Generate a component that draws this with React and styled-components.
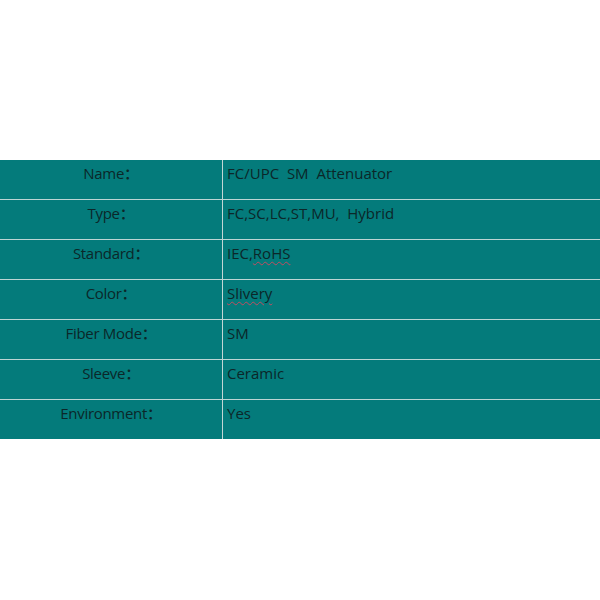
import styled, { createGlobalStyle } from "styled-components";

const Global = createGlobalStyle`
  html, body {
    margin: 0;
    padding: 0;
    background: #ffffff;
  }
`;

const Page = styled.div`
  width: 600px;
  height: 600px;
  padding-top: 160px;
  box-sizing: border-box;
  font-family: "Open Sans", "Noto Sans CJK SC", sans-serif;
`;

const Table = styled.div`
  display: flex;
  flex-direction: column;
  background: #047b7b;
`;

const Row = styled.div`
  display: grid;
  grid-template-columns: 223px 1fr;
  height: 39px;
  border-top: ${(p) => (p.$first ? "none" : "1px solid #bcd5d4")};
`;

const Label = styled.div`
  border-right: 1px solid #c3d6d5;
  text-align: center;
  padding-top: 2px;
  font-size: 15px;
  font-weight: 500;
  line-height: 22px;
  color: #0b2729;
  letter-spacing: -0.3px;
`;

const Value = styled.div`
  padding: 2px 0 0 4px;
  font-size: 15px;
  font-weight: 500;
  line-height: 22px;
  color: #0b2729;
  white-space: pre;
  letter-spacing: 0;
`;

const Spell = styled.span`
  text-decoration: underline wavy #c24c60;
  text-decoration-thickness: 1px;
  text-underline-offset: 2px;
`;

const ROWS = [
  { label: "Name：", value: "FC/UPC  SM  Attenuator" },
  { label: "Type：", value: "FC,SC,LC,ST,MU,  Hybrid" },
  { label: "Standard：", value: <>IEC,<Spell>RoHS</Spell></> },
  { label: "Color：", value: <Spell>Slivery</Spell> },
  { label: "Fiber Mode：", value: "SM" },
  { label: "Sleeve：", value: "Ceramic" },
  { label: "Environment：", value: "Yes" },
];

export default function App() {
  return (
    <Page>
      <Global />
      <Table>
        {ROWS.map((r, i) => (
          <Row key={r.label} $first={i === 0}>
            <Label>{r.label}</Label>
            <Value>{r.value}</Value>
          </Row>
        ))}
      </Table>
    </Page>
  );
}
